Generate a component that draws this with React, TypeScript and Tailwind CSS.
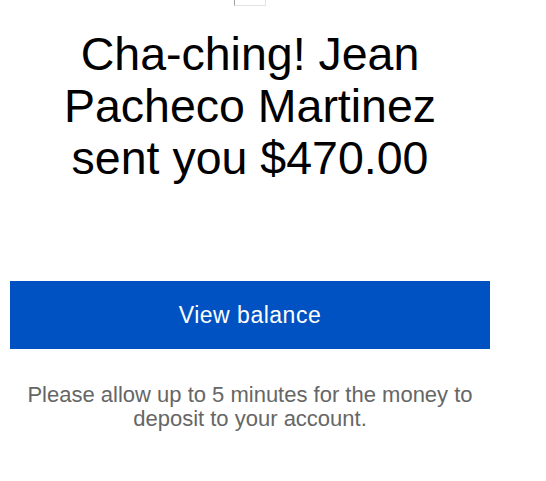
export default function App() {
  return (
    <div className="ml-[10px] w-[480px] bg-white font-['Liberation_Sans',Arial,sans-serif]">
      {/* image placeholder, cut at the top */}
      <div className="flex justify-center">
        <div className="h-[6px] w-[32px] border border-t-0 border-[#e3e3e3] border-l-[#a0a0a0]" />
      </div>

      <h1 className="mt-[22px] px-[38px] text-center text-[46.5px] font-normal leading-[52px] text-black">
        Cha-ching! Jean Pacheco Martinez sent you $470.00
      </h1>

      <a className="mt-[97px] flex h-[68px] w-full items-center justify-center bg-[#0052c2] text-white">
        <span className="text-[23px] leading-[24px] tracking-[0.5px]">View balance</span>
      </a>

      <p className="mt-[34px] px-[10px] text-center text-[22px] leading-[24px] text-[#666666]">
        Please allow up to 5 minutes for the money to deposit to your account.
      </p>
    </div>
  )
}
